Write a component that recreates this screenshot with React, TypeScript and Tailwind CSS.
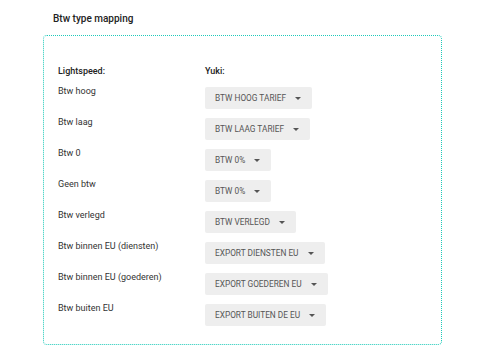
import React from "react";

const rows: [string, string][] = [
  ["Btw hoog", "BTW HOOG TARIEF"],
  ["Btw laag", "BTW LAAG TARIEF"],
  ["Btw 0", "BTW 0%"],
  ["Geen btw", "BTW 0%"],
  ["Btw verlegd", "BTW VERLEGD"],
  ["Btw binnen EU (diensten)", "EXPORT DIENSTEN EU"],
  ["Btw binnen EU (goederen)", "EXPORT GOEDEREN EU"],
  ["Btw buiten EU", "EXPORT BUITEN DE EU"],
];

function Caret() {
  return (
    <svg width="6" height="3" viewBox="0 0 6 3" className="shrink-0">
      <path d="M0 0 L6 0 L3 3 Z" fill="#555" />
    </svg>
  );
}

export default function App() {
  return (
    <div
      className="w-[480px] h-[360px] bg-white pl-[43px] pt-[12px]"
      style={{ fontFamily: "Roboto, 'Liberation Sans', sans-serif" }}
    >
      <div className="ml-[10px] text-[10px] leading-[14px] font-medium text-[#222]">
        Btw type mapping
      </div>
      <div className="mt-[9px] w-[399px] h-[310px] border border-dotted border-[#1ec9b9] rounded-[4px] pl-[14px] pt-[29px]">
        <div className="flex text-[9px] leading-[12px] font-medium text-[#222]">
          <div className="w-[147px]">Lightspeed:</div>
          <div>Yuki:</div>
        </div>
        <div className="mt-[8px] flex flex-col gap-[7px]">
          {rows.map(([l, y], i) => (
            <div key={i} className="flex items-start">
              <div className="w-[147px] text-[9px] leading-[12px] text-[#333]">{l}</div>
              <div className="mt-[2px] h-[22px] flex items-center gap-[9px] pl-[10px] pr-[11px] rounded-[2px] bg-[#eeeeee] text-[8.3px] text-[#555] uppercase">
                <span>{y}</span>
                <Caret />
              </div>
            </div>
          ))}
        </div>
      </div>
    </div>
  );
}
